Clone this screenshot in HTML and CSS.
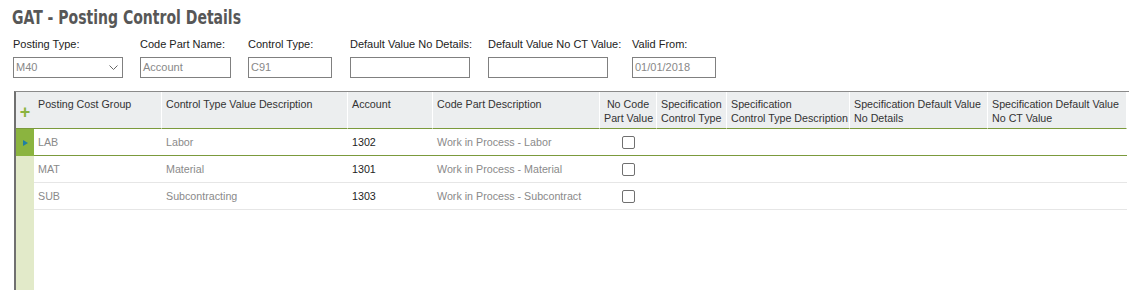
FILE: index.html
```html
<!DOCTYPE html>
<html lang="en">
<head>
    <meta charset="UTF-8">
    <title>GAT - Posting Control Details</title>
    <link rel="stylesheet" href="styles.css">
</head>
<body>
    <div class="page">
        <h1 class="title">GAT - Posting Control Details</h1>

        <div class="filters">
            <div class="field f-posting">
                <label>Posting Type:</label>
                <div class="box select">
                    <span>M40</span>
                    <svg width="9" height="6" viewBox="0 0 9 6"><path d="M0.5 0.5 L4.5 4.5 L8.5 0.5" fill="none" stroke="#666" stroke-width="1"/></svg>
                </div>
            </div>
            <div class="field f-codepart">
                <label>Code Part Name:</label>
                <div class="box">Account</div>
            </div>
            <div class="field f-control">
                <label>Control Type:</label>
                <div class="box">C91</div>
            </div>
            <div class="field f-wide">
                <label>Default Value No Details:</label>
                <div class="box"></div>
            </div>
            <div class="field f-wide">
                <label>Default Value No CT Value:</label>
                <div class="box"></div>
            </div>
            <div class="field f-valid">
                <label>Valid From:</label>
                <div class="box">01/01/2018</div>
            </div>
        </div>

        <div class="grid">
            <table>
                <colgroup>
                    <col class="c-gutter">
                    <col class="c-group">
                    <col class="c-desc">
                    <col class="c-account">
                    <col class="c-cpdesc">
                    <col class="c-nocode">
                    <col class="c-spec">
                    <col class="c-specdesc">
                    <col class="c-def1">
                    <col class="c-def2">
                </colgroup>
                <thead>
                    <tr>
                        <th class="gutter"><span class="plus">+</span></th>
                        <th>Posting Cost Group</th>
                        <th>Control Type Value Description</th>
                        <th>Account</th>
                        <th>Code Part Description</th>
                        <th class="center">No Code<br>Part Value</th>
                        <th>Specification<br>Control Type</th>
                        <th>Specification<br>Control Type Description</th>
                        <th>Specification Default Value<br>No Details</th>
                        <th>Specification Default Value<br>No CT Value</th>
                    </tr>
                </thead>
                <tbody>
                    <tr class="selected">
                        <td class="gutter"><span class="arrow"></span></td>
                        <td class="muted">LAB</td>
                        <td class="muted">Labor</td>
                        <td>1302</td>
                        <td class="muted">Work in Process - Labor</td>
                        <td class="center"><span class="check"></span></td>
                        <td></td><td></td><td></td><td></td>
                    </tr>
                    <tr>
                        <td class="gutter"></td>
                        <td class="muted">MAT</td>
                        <td class="muted">Material</td>
                        <td>1301</td>
                        <td class="muted">Work in Process - Material</td>
                        <td class="center"><span class="check"></span></td>
                        <td></td><td></td><td></td><td></td>
                    </tr>
                    <tr>
                        <td class="gutter"></td>
                        <td class="muted">SUB</td>
                        <td class="muted">Subcontracting</td>
                        <td>1303</td>
                        <td class="muted">Work in Process - Subcontract</td>
                        <td class="center"><span class="check"></span></td>
                        <td></td><td></td><td></td><td></td>
                    </tr>
                </tbody>
            </table>
        </div>
    </div>
</body>
</html>
```

FILE: styles.css
```css
body {
    margin: 0;
    background: #fff;
    font-family: "Liberation Sans", Arial, sans-serif;
    overflow: hidden;
}
.page {
    padding: 5px 0 0 12px;
}
.title {
    display: inline-block;
    margin: 0;
    font-family: "DejaVu Sans", sans-serif;
    font-stretch: condensed;
    font-weight: bold;
    font-size: 19px;
    line-height: 24px;
    color: #575757;
    transform: scaleX(0.82);
    transform-origin: left center;
    white-space: nowrap;
}
.filters {
    display: flex;
    gap: 17px;
    margin-top: 9px;
    padding-left: 1px;
}
.field {
    display: flex;
    flex-direction: column;
    gap: 6px;
}
.field label {
    font-size: 11px;
    line-height: 13px;
    color: #222;
    white-space: nowrap;
}
.box {
    height: 19px;
    border: 1px solid #808080;
    font-size: 11px;
    line-height: 19px;
    color: #888;
    padding-left: 2px;
}
.select {
    display: flex;
    justify-content: space-between;
    align-items: center;
    padding-right: 4px;
}
.f-posting { width: 110px; }
.f-codepart { width: 91px; }
.f-control { width: 84px; }
.f-wide { width: 120px; }
.f-control + .f-wide,
.f-wide + .f-wide { margin-left: 1px; }
.f-valid { width: 84px; margin-left: 7px; }

.grid {
    margin: 13px 0 0 2px;
    height: 200px;
    border-top: 1px solid #8a8a8a;
    border-left: 2px solid #707070;
    background: linear-gradient(to right, #e2eac9 18px, #fff 18px);
    overflow: hidden;
}
table {
    border-collapse: separate;
    border-spacing: 0;
    table-layout: fixed;
    width: 1111px;
    font-size: 10.7px;
}
.c-gutter { width: 18px; }
.c-group { width: 128px; }
.c-desc { width: 186px; }
.c-account { width: 85px; }
.c-cpdesc { width: 167px; }
.c-nocode { width: 57px; }
.c-spec { width: 70px; }
.c-specdesc { width: 123px; }
.c-def1 { width: 138px; }
.c-def2 { width: 139px; }

th {
    height: 31px;
    padding: 5px 4px 0;
    background: #eceeef;
    border-right: 1px solid #fff;
    border-bottom: 1px solid #7b9a3c;
    text-align: left;
    vertical-align: top;
    font-weight: normal;
    line-height: 14px;
    color: #333;
    white-space: nowrap;
    overflow: hidden;
}
th.center, td.center { text-align: center; }
th.gutter {
    padding: 0;
    vertical-align: middle;
    text-align: center;
    border-right: none;
}
.plus {
    display: inline-block;
    margin-top: 6px;
    font-size: 18px;
    font-weight: bold;
    line-height: 14px;
    color: #8bb43f;
}
td {
    height: 26px;
    padding: 0 4px;
    border-bottom: 1px solid #e6e6e6;
    color: #222;
    white-space: nowrap;
}
td.muted { color: #8a8a8a; }
td.gutter {
    padding: 0;
    border-bottom-color: transparent;
}
tr.selected td {
    border-bottom: 1px solid #7b9a3c;
}
tr.selected td.gutter {
    background: #8bb43f;
    border-bottom-color: #8bb43f;
    text-align: center;
}
.arrow {
    display: inline-block;
    width: 0;
    height: 0;
    border-top: 3px solid transparent;
    border-bottom: 3px solid transparent;
    border-left: 5px solid #1f7fa3;
    vertical-align: middle;
}
.check {
    display: inline-block;
    width: 11px;
    height: 11px;
    border: 1px solid #707070;
    border-radius: 2px;
    vertical-align: middle;
    background: #fff;
}
```
